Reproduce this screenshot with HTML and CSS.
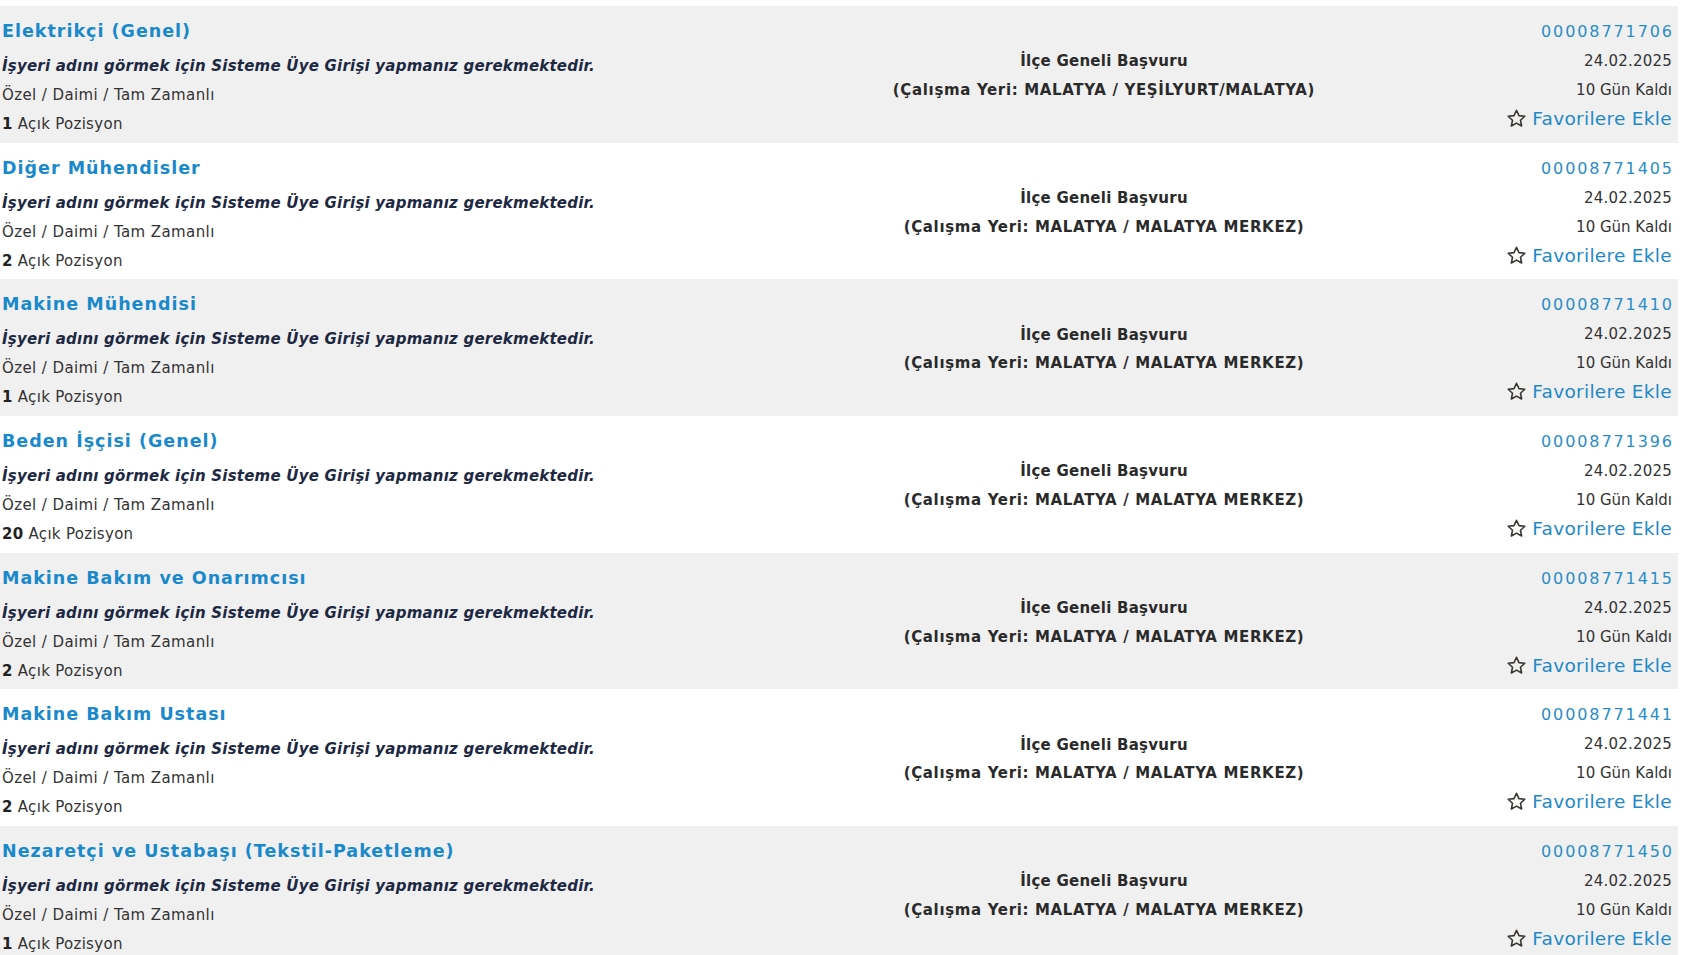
FILE: index.html
```html
<!DOCTYPE html>
<html lang="tr">
<head>
<meta charset="utf-8">
<title>İş İlanları</title>
<link rel="stylesheet" href="styles.css">
</head>
<body>
<div class="list">
  <div class="row alt">
    <div class="col-main">
      <div class="title">Elektrikçi (Genel)</div>
      <div class="employer">İşyeri adını görmek için Sisteme Üye Girişi yapmanız gerekmektedir.</div>
      <div class="type">Özel / Daimi / Tam Zamanlı</div>
      <div class="count"><b>1</b> Açık Pozisyon</div>
    </div>
    <div class="col-mid">
      <div class="scope">İlçe Geneli Başvuru</div>
      <div class="place">(Çalışma Yeri: MALATYA / YEŞİLYURT/MALATYA)</div>
    </div>
    <div class="col-side">
      <div class="num">00008771706</div>
      <div class="date">24.02.2025</div>
      <div class="left">10 Gün Kaldı</div>
      <div class="fav"><svg class="star" viewBox="0 0 24 24"><path d="M12 2.6l2.85 6.1 6.65.75-4.95 4.55 1.35 6.6L12 17.3l-5.9 3.3 1.35-6.6L2.5 9.45l6.65-.75z"/></svg>Favorilere Ekle</div>
    </div>
  </div>
  <div class="row">
    <div class="col-main">
      <div class="title">Diğer Mühendisler</div>
      <div class="employer">İşyeri adını görmek için Sisteme Üye Girişi yapmanız gerekmektedir.</div>
      <div class="type">Özel / Daimi / Tam Zamanlı</div>
      <div class="count"><b>2</b> Açık Pozisyon</div>
    </div>
    <div class="col-mid">
      <div class="scope">İlçe Geneli Başvuru</div>
      <div class="place">(Çalışma Yeri: MALATYA / MALATYA MERKEZ)</div>
    </div>
    <div class="col-side">
      <div class="num">00008771405</div>
      <div class="date">24.02.2025</div>
      <div class="left">10 Gün Kaldı</div>
      <div class="fav"><svg class="star" viewBox="0 0 24 24"><path d="M12 2.6l2.85 6.1 6.65.75-4.95 4.55 1.35 6.6L12 17.3l-5.9 3.3 1.35-6.6L2.5 9.45l6.65-.75z"/></svg>Favorilere Ekle</div>
    </div>
  </div>
  <div class="row alt">
    <div class="col-main">
      <div class="title">Makine Mühendisi</div>
      <div class="employer">İşyeri adını görmek için Sisteme Üye Girişi yapmanız gerekmektedir.</div>
      <div class="type">Özel / Daimi / Tam Zamanlı</div>
      <div class="count"><b>1</b> Açık Pozisyon</div>
    </div>
    <div class="col-mid">
      <div class="scope">İlçe Geneli Başvuru</div>
      <div class="place">(Çalışma Yeri: MALATYA / MALATYA MERKEZ)</div>
    </div>
    <div class="col-side">
      <div class="num">00008771410</div>
      <div class="date">24.02.2025</div>
      <div class="left">10 Gün Kaldı</div>
      <div class="fav"><svg class="star" viewBox="0 0 24 24"><path d="M12 2.6l2.85 6.1 6.65.75-4.95 4.55 1.35 6.6L12 17.3l-5.9 3.3 1.35-6.6L2.5 9.45l6.65-.75z"/></svg>Favorilere Ekle</div>
    </div>
  </div>
  <div class="row">
    <div class="col-main">
      <div class="title">Beden İşçisi (Genel)</div>
      <div class="employer">İşyeri adını görmek için Sisteme Üye Girişi yapmanız gerekmektedir.</div>
      <div class="type">Özel / Daimi / Tam Zamanlı</div>
      <div class="count"><b>20</b> Açık Pozisyon</div>
    </div>
    <div class="col-mid">
      <div class="scope">İlçe Geneli Başvuru</div>
      <div class="place">(Çalışma Yeri: MALATYA / MALATYA MERKEZ)</div>
    </div>
    <div class="col-side">
      <div class="num">00008771396</div>
      <div class="date">24.02.2025</div>
      <div class="left">10 Gün Kaldı</div>
      <div class="fav"><svg class="star" viewBox="0 0 24 24"><path d="M12 2.6l2.85 6.1 6.65.75-4.95 4.55 1.35 6.6L12 17.3l-5.9 3.3 1.35-6.6L2.5 9.45l6.65-.75z"/></svg>Favorilere Ekle</div>
    </div>
  </div>
  <div class="row alt">
    <div class="col-main">
      <div class="title">Makine Bakım ve Onarımcısı</div>
      <div class="employer">İşyeri adını görmek için Sisteme Üye Girişi yapmanız gerekmektedir.</div>
      <div class="type">Özel / Daimi / Tam Zamanlı</div>
      <div class="count"><b>2</b> Açık Pozisyon</div>
    </div>
    <div class="col-mid">
      <div class="scope">İlçe Geneli Başvuru</div>
      <div class="place">(Çalışma Yeri: MALATYA / MALATYA MERKEZ)</div>
    </div>
    <div class="col-side">
      <div class="num">00008771415</div>
      <div class="date">24.02.2025</div>
      <div class="left">10 Gün Kaldı</div>
      <div class="fav"><svg class="star" viewBox="0 0 24 24"><path d="M12 2.6l2.85 6.1 6.65.75-4.95 4.55 1.35 6.6L12 17.3l-5.9 3.3 1.35-6.6L2.5 9.45l6.65-.75z"/></svg>Favorilere Ekle</div>
    </div>
  </div>
  <div class="row">
    <div class="col-main">
      <div class="title">Makine Bakım Ustası</div>
      <div class="employer">İşyeri adını görmek için Sisteme Üye Girişi yapmanız gerekmektedir.</div>
      <div class="type">Özel / Daimi / Tam Zamanlı</div>
      <div class="count"><b>2</b> Açık Pozisyon</div>
    </div>
    <div class="col-mid">
      <div class="scope">İlçe Geneli Başvuru</div>
      <div class="place">(Çalışma Yeri: MALATYA / MALATYA MERKEZ)</div>
    </div>
    <div class="col-side">
      <div class="num">00008771441</div>
      <div class="date">24.02.2025</div>
      <div class="left">10 Gün Kaldı</div>
      <div class="fav"><svg class="star" viewBox="0 0 24 24"><path d="M12 2.6l2.85 6.1 6.65.75-4.95 4.55 1.35 6.6L12 17.3l-5.9 3.3 1.35-6.6L2.5 9.45l6.65-.75z"/></svg>Favorilere Ekle</div>
    </div>
  </div>
  <div class="row alt">
    <div class="col-main">
      <div class="title">Nezaretçi ve Ustabaşı (Tekstil-Paketleme)</div>
      <div class="employer">İşyeri adını görmek için Sisteme Üye Girişi yapmanız gerekmektedir.</div>
      <div class="type">Özel / Daimi / Tam Zamanlı</div>
      <div class="count"><b>1</b> Açık Pozisyon</div>
    </div>
    <div class="col-mid">
      <div class="scope">İlçe Geneli Başvuru</div>
      <div class="place">(Çalışma Yeri: MALATYA / MALATYA MERKEZ)</div>
    </div>
    <div class="col-side">
      <div class="num">00008771450</div>
      <div class="date">24.02.2025</div>
      <div class="left">10 Gün Kaldı</div>
      <div class="fav"><svg class="star" viewBox="0 0 24 24"><path d="M12 2.6l2.85 6.1 6.65.75-4.95 4.55 1.35 6.6L12 17.3l-5.9 3.3 1.35-6.6L2.5 9.45l6.65-.75z"/></svg>Favorilere Ekle</div>
    </div>
  </div>
</div>
</body>
</html>
```
FILE: styles.css
```css
html, body {
  margin: 0;
  padding: 0;
  background: #ffffff;
}
body {
  font-family: "DejaVu Sans", Verdana, sans-serif;
  color: #333333;
  overflow: hidden;
}
.list {
  padding: 6px 4px 0 0;
}
.row {
  display: grid;
  grid-template-columns: 800px 608px 1fr;
  height: 136.7px;
  background: #ffffff;
}
.row.alt {
  background: #f0f0f0;
}
.col-main {
  padding: 10px 0 0 2px;
  white-space: nowrap;
}
.title {
  font-size: 17.5px;
  font-weight: bold;
  color: #1a89cb;
  letter-spacing: 1px;
  line-height: 30px;
  margin-bottom: 5px;
}
.employer {
  font-size: 15px;
  font-weight: bold;
  font-style: italic;
  color: #1d2842;
  letter-spacing: 0.22px;
  line-height: 30px;
}
.type {
  font-size: 15px;
  letter-spacing: 0.4px;
  line-height: 29px;
  color: #333;
}
.count {
  font-size: 15px;
  letter-spacing: 0.3px;
  line-height: 28px;
  color: #333;
}
.count b {
  color: #222;
}
.col-mid {
  display: flex;
  flex-direction: column;
  justify-content: center;
  align-items: center;
  white-space: nowrap;
  padding-top: 3px;
}
.scope, .place {
  font-size: 15px;
  font-weight: bold;
  line-height: 28.5px;
  color: #2a2a2a;
}
.scope {
  letter-spacing: 0.25px;
}
.place {
  letter-spacing: 0.65px;
}
.col-side {
  padding: 11px 6px 0 0;
  display: flex;
  flex-direction: column;
  align-items: flex-end;
  white-space: nowrap;
}
.num {
  font-size: 16px;
  color: #2a8dc6;
  letter-spacing: 1.9px;
  margin-right: -1.9px;
  line-height: 29px;
}
.date {
  font-size: 15px;
  letter-spacing: 0.2px;
  line-height: 30px;
  color: #333;
}
.left {
  font-size: 15px;
  line-height: 26px;
  margin-top: 1px;
  color: #333;
}
.fav {
  display: flex;
  align-items: center;
  gap: 5px;
  margin-top: -1px;
  font-size: 18.5px;
  letter-spacing: 0.3px;
  line-height: 33px;
  color: #1e88c8;
}
.star {
  width: 21px;
  height: 21px;
  fill: none;
  stroke: #3a3630;
  stroke-width: 1.8;
  stroke-linejoin: round;
}
```
